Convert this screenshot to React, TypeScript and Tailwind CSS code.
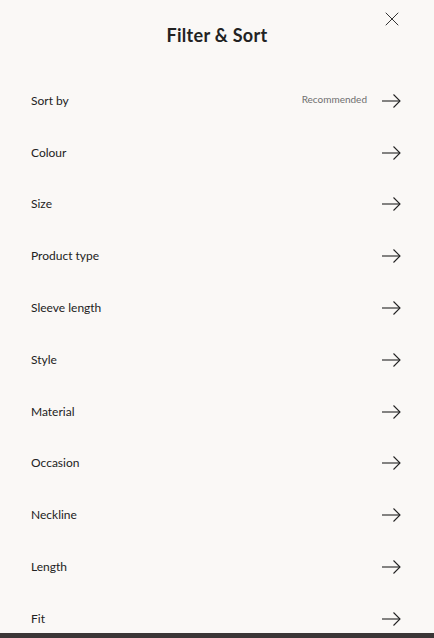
import { X } from "lucide-react";

const FILTERS = [
  "Sort by",
  "Colour",
  "Size",
  "Product type",
  "Sleeve length",
  "Style",
  "Material",
  "Occasion",
  "Neckline",
  "Length",
  "Fit",
];

function ArrowRight() {
  return (
    <svg width="20" height="16" viewBox="0 0 20 16" fill="none" stroke="#222" strokeWidth="1.1">
      <path d="M1 8h18" />
      <path d="M12.5 1.5 19 8l-6.5 6.5" />
    </svg>
  );
}

export default function App() {
  return (
    <div className="h-[638px] w-[434px] bg-[#3b3636] font-['Lato','Noto_Sans',sans-serif] text-[#222]">
      <div className="relative h-[633px] overflow-hidden bg-[#faf8f6]">
        <div className="flex h-[75px] items-start justify-center pt-[22px]">
          <h1 className="text-[18px] font-bold tracking-[0.3px] text-[#222]">Filter &amp; Sort</h1>
        </div>
        <button
          type="button"
          aria-label="Close"
          className="absolute right-[30px] top-[7px] text-[#333]"
        >
          <X className="h-6 w-6" strokeWidth={1} />
        </button>
        <ul>
          {FILTERS.map((name) => (
            <li
              key={name}
              className="flex h-[51.8px] items-center justify-between pl-[31px] pr-[33px]"
            >
              <span className="text-[12px]">{name}</span>
              <span className="flex items-center gap-[14px]">
                {name === "Sort by" ? (
                  <span className="mb-[3px] text-[10px] text-[#6f6f6f]">Recommended</span>
                ) : null}
                <ArrowRight />
              </span>
            </li>
          ))}
        </ul>
      </div>
    </div>
  );
}
